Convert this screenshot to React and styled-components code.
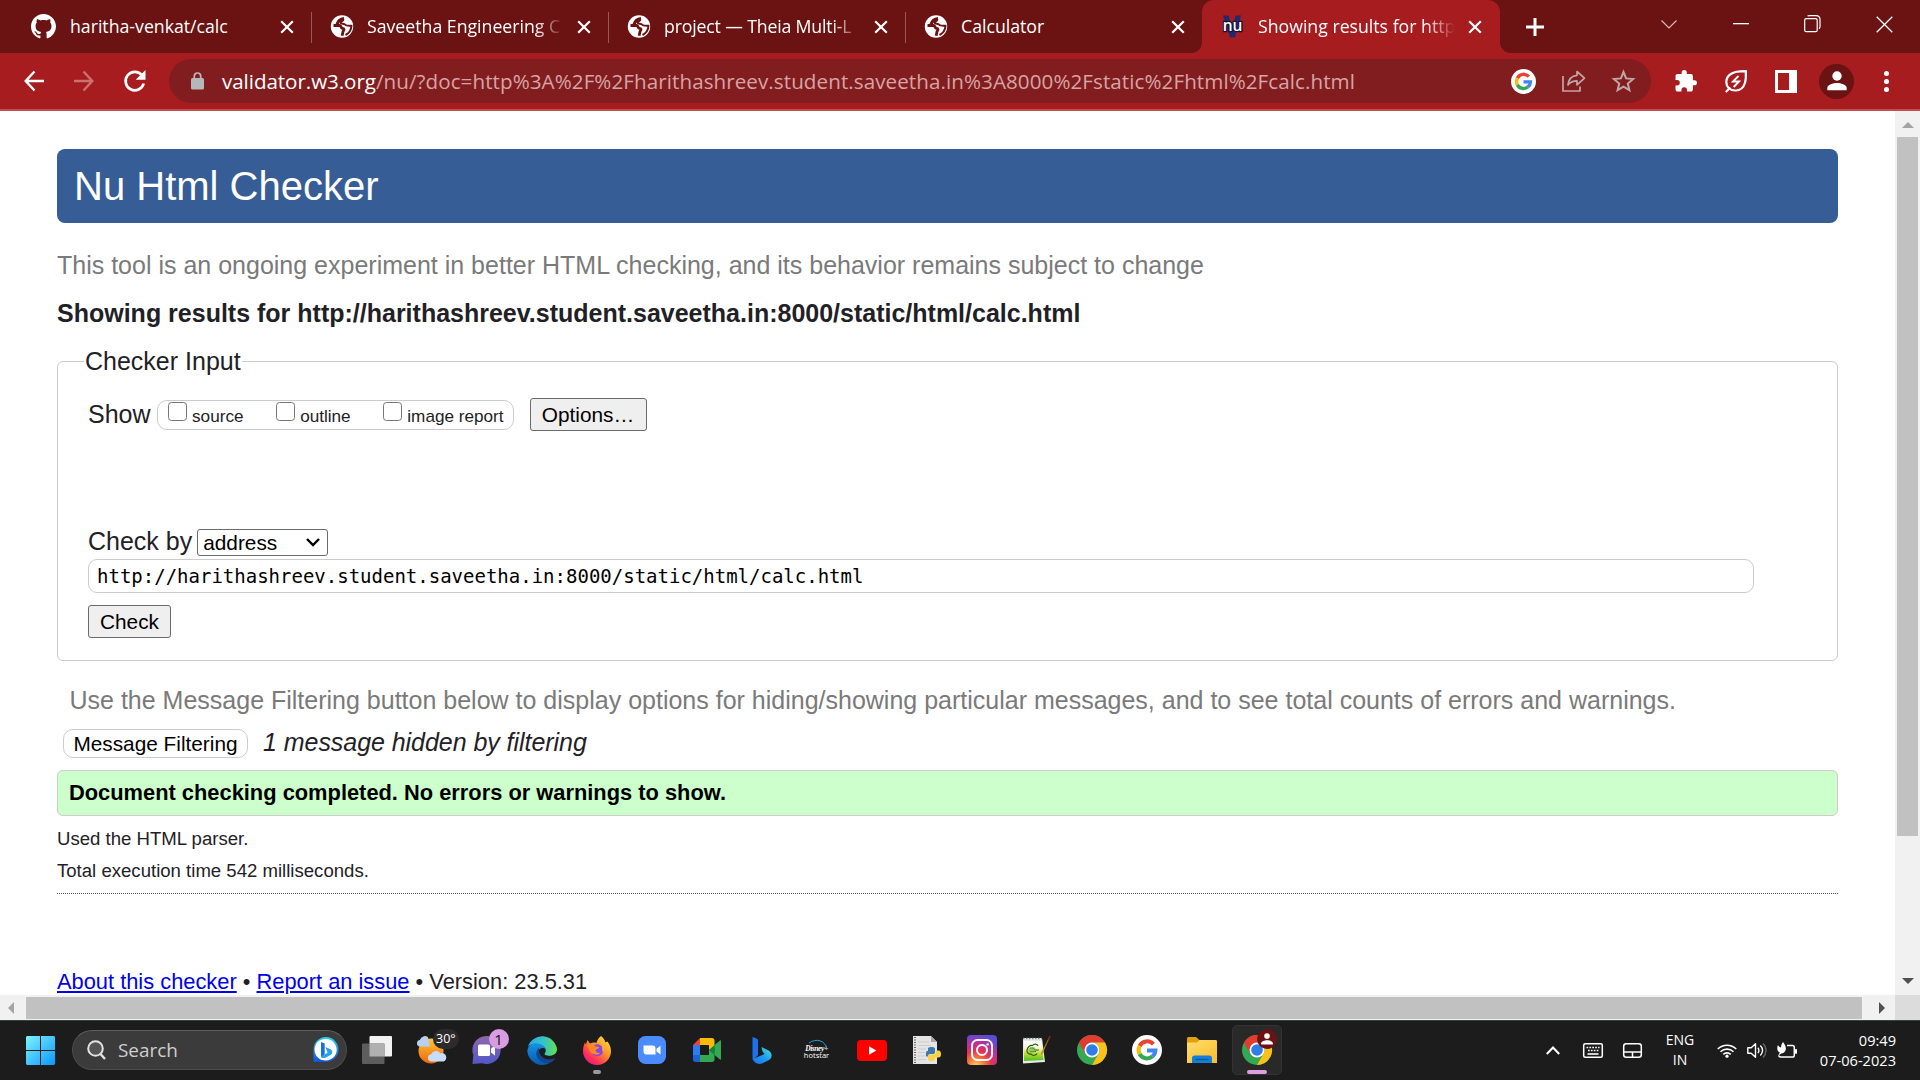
import React from "react";
import styled, { createGlobalStyle, css } from "styled-components";

const Global = createGlobalStyle`
  * { box-sizing: border-box; }
  html, body { margin: 0; padding: 0; background: #fff; overflow: hidden; }
`;

const ui = css`font-family: "Open Sans", "Noto Sans", sans-serif;`;
const sans = css`font-family: "Liberation Sans", Arial, sans-serif;`;

const Screen = styled.div`
  width: 1920px;
  height: 1080px;
  display: flex;
  flex-direction: column;
  overflow: hidden;
  svg { display: block; flex: none; overflow: visible; }
`;

/* ---------- browser tabs ---------- */
const TabStrip = styled.div`
  ${ui}
  height: 53px;
  flex: none;
  display: flex;
  align-items: stretch;
  padding-left: 14px;
  background: #6b1212;
`;
const Tab = styled.div`
  position: relative;
  width: 298px;
  margin-right: -1px;
  padding: 0 14px 0 17px;
  display: flex;
  align-items: center;
  background: ${p => (p.$active ? "#a61c1f" : "transparent")};
  border-radius: ${p => (p.$active ? "12px 12px 0 0" : "0")};
  ${p => p.$line && css`
    &::after {
      content: "";
      position: absolute;
      right: 0;
      top: 12px;
      width: 1px;
      height: 31px;
      background: #97595a;
    }
  `}
  ${p => p.$active && css`
    &::before, &::after {
      content: "";
      position: absolute;
      bottom: 0;
      width: 10px;
      height: 10px;
    }
    &::before { left: -10px; background: radial-gradient(circle at 0 0, transparent 9.5px, #a61c1f 10px); }
    &::after { right: -10px; background: radial-gradient(circle at 100% 0, transparent 9.5px, #a61c1f 10px); }
  `}
`;
const TabTitle = styled.div`
  flex: none;
  width: 197px;
  margin-left: 14px;
  margin-top: -1px;
  white-space: nowrap;
  color: #fff;
  font-size: 17.7px;
  line-height: 28px;
  letter-spacing: ${p => p.$track || 0}px;
  ${p => p.$fade && css`mask-image: linear-gradient(90deg, #000 168px, transparent 197px);`}
`;
const TabClose = styled.div`
  flex: none;
  width: 14px;
  margin-left: 13px;
`;
const Plus = styled.div`
  display: flex;
  align-items: center;
  margin-left: 27px;
`;
const WindowKeys = styled.div`
  display: flex;
  align-items: flex-start;
  margin-left: auto;
  padding: 14px 27px 0 0;
`;
const WindowKey = styled.div`
  width: 18px;
  height: 20px;
  margin-left: ${p => p.$gap}px;
  display: flex;
  align-items: center;
  justify-content: center;
`;

/* ---------- toolbar ---------- */
const Toolbar = styled.div`
  ${ui}
  height: 58px;
  flex: none;
  display: flex;
  align-items: center;
  padding: 0 27px 0 24px;
  background: #a61c1f;
  border-bottom: 2px solid #c24e50;
`;
const NavIcons = styled.div`
  width: 145px;
  display: flex;
  align-items: center;
  gap: 30px;
`;
const Address = styled.div`
  width: 1482px;
  height: 44px;
  display: flex;
  align-items: center;
  padding: 0 16px 0 22px;
  border-radius: 22px;
  background: #821d1f;
`;
const Url = styled.div`
  flex: 1;
  margin: -1px 0 0 18px;
  white-space: nowrap;
  font-size: 20.6px;
  line-height: 30px;
  letter-spacing: 0.075px;
  color: #d7a4a5;
`;
const Domain = styled.span`
  color: #fff;
  letter-spacing: -0.06px;
`;
const AddressIcons = styled.div`
  display: flex;
  align-items: center;
  gap: 26px;
`;
const Extensions = styled.div`
  display: flex;
  align-items: center;
  gap: 28px;
  margin-left: 24px;
`;
const Avatar = styled.div`
  width: 35px;
  height: 35px;
  margin: 0 2px 0 -6px;
  display: flex;
  align-items: center;
  justify-content: center;
  border-radius: 50%;
  background: #6b1212;
`;

/* ---------- page ---------- */
const Viewport = styled.div`
  height: 884px;
  flex: none;
  display: flex;
`;
const Page = styled.main`
  ${sans}
  width: 1895px;
  height: 884px;
  overflow: hidden;
  padding: 38px 57px 0 57px;
  color: #1f2126;
  font-size: 25px;
  line-height: 28px;
  background: #fff;
  white-space: nowrap;
`;
const Banner = styled.h1`
  margin: 0;
  height: 74px;
  padding: 0 17px;
  border-radius: 8px;
  background: #365d95;
  color: #fff;
  font-size: 40px;
  font-weight: 400;
  line-height: 75px;
`;
const Note = styled.p`
  margin: ${p => p.$top}px 0 0 ${p => p.$left || 0}px;
  color: #7a7a7a;
`;
const Result = styled.h2`
  margin: 20px 0 0;
  font-size: 25px;
  line-height: 28px;
`;
const Fieldset = styled.fieldset`
  margin: 20px 0 0;
  height: 314px;
  padding: 0 29px 0 30px;
  border: 1px solid #ccc;
  border-radius: 6px;
`;
const Legend = styled.legend`
  margin-left: -4px;
  padding: 0 1px;
`;
const RowLabel = styled.span`
  padding-bottom: 2px;
`;
const ShowRow = styled.div`
  height: 33px;
  margin-top: 23px;
  display: flex;
  align-items: center;
`;
const CheckGroup = styled.div`
  width: 357px;
  height: 30px;
  margin-left: 6px;
  padding: 1px 9px 0 10px;
  display: flex;
  justify-content: space-between;
  border: 1px solid #ccc;
  border-radius: 10px;
`;
const CheckLabel = styled.label`
  display: flex;
  gap: 5.5px;
  font-size: 17.15px;
  line-height: 28px;
`;
const Box = styled.span`
  width: 19px;
  height: 19px;
  border: 1.5px solid #767676;
  border-radius: 3.5px;
  background: #fff;
`;
const Button = styled.button`
  ${sans}
  display: block;
  height: 33px;
  width: ${p => p.$w}px;
  margin: ${p => p.$m || "0"};
  padding: 0;
  border: 1px solid #6b6b6b;
  border-radius: 3px;
  background: #efefef;
  color: #000;
  font-size: 20.8px;
  line-height: 31px;
  ${p => p.$round && css`
    height: 29px;
    line-height: 25px;
    border-color: #ccc;
    border-radius: 10px;
    background: #fff;
  `}
`;
const AddressRow = styled.div`
  height: 28px;
  margin-top: 97px;
  display: flex;
  align-items: center;
`;
const Select = styled.div`
  width: 131px;
  height: 27px;
  margin-left: 5px;
  padding: 0 7px 0 5px;
  display: flex;
  align-items: center;
  justify-content: space-between;
  border: 1px solid #6b6b6b;
  border-radius: 3px;
  color: #000;
  font-size: 20.8px;
  line-height: 25px;
`;
const UrlInput = styled.div`
  width: 1666px;
  height: 34px;
  margin-top: 3px;
  padding-left: 8px;
  border: 1px solid #ccc;
  border-radius: 9px;
  color: #000;
  font: 19px/32px "DejaVu Sans Mono", monospace;
`;
const FilterRow = styled.div`
  height: 29px;
  margin: 15px 0 0 6px;
  display: flex;
  align-items: center;
  em { margin: -4px 0 0 15px; letter-spacing: -0.05px; }
`;
const Success = styled.p`
  margin: 12px 0 0;
  height: 46px;
  padding-left: 11px;
  border: 1px solid #ccc;
  border-radius: 6px;
  background: #ccffcc;
  color: #000;
  font-size: 21.85px;
  font-weight: 700;
  line-height: 43px;
`;
const Small = styled.p`
  margin: ${p => p.$top}px 0 0;
  font-size: 18.58px;
  line-height: 22px;
`;
const Rule = styled.hr`
  margin: 11px 0 0;
  border: 0;
  border-top: 1px dotted #555;
`;
const Footer = styled.footer`
  margin-top: 75px;
  font-size: 21.85px;
  line-height: 26px;
`;
const Link = styled.a`
  color: #0000ee;
  text-decoration: underline;
  text-decoration-thickness: 2px;
  text-underline-offset: 2px;
`;

/* ---------- scroll bars ---------- */
const VBar = styled.div`
  width: 25px;
  display: flex;
  flex-direction: column;
  align-items: center;
  justify-content: space-between;
  padding: 11px 0 11px;
  background: #f1f1f1;
`;
const VThumb = styled.div`
  width: 21px;
  height: 699px;
  margin: 9px 0 auto;
  background: #c1c1c1;
`;
const HBar = styled.div`
  height: 25px;
  flex: none;
  display: flex;
  align-items: center;
  background: #f1f1f1;
`;
const HThumb = styled.div`
  width: 1836px;
  height: 22px;
  margin: 0 17px 0 10px;
  background: #c1c1c1;
`;
const Corner = styled.div`
  width: 25px;
  height: 25px;
  margin-left: auto;
  background: #dcdcdc;
`;

/* ---------- taskbar ---------- */
const Taskbar = styled.div`
  ${ui}
  height: 60px;
  flex: none;
  display: flex;
  align-items: center;
  padding: 0 24px 1px 26px;
  border-top: 1px solid #3a3f40;
  background: #1c1c1c;
  color: #fff;
`;
const SearchBox = styled.div`
  width: 275px;
  height: 40px;
  margin: 0 2px 0 17px;
  padding: 0 7px 0 14px;
  display: flex;
  align-items: center;
  border: 1px solid #4c4c4c;
  border-top-color: #5f5f5f;
  border-radius: 20px;
  background: #3b3b3b;
`;
const SearchText = styled.span`
  flex: 1;
  margin-left: 12px;
  color: #cfcfcf;
  font-size: 18.9px;
  line-height: 26px;
`;
const AppCell = styled.div`
  position: relative;
  width: 55px;
  height: 50px;
  display: flex;
  align-items: center;
  justify-content: center;
`;
const ActiveTile = styled.div`
  width: 50px;
  height: 50px;
  display: flex;
  align-items: center;
  justify-content: center;
  border: 1px solid #333;
  border-radius: 5px;
  background: #292929;
`;
const Running = styled.i`
  position: absolute;
  bottom: 1px;
  width: ${p => (p.$wide ? 20 : 8)}px;
  height: 4px;
  border-radius: 2px;
  background: ${p => (p.$wide ? "#dd9fe0" : "#9a9a9a")};
`;
const Badge = styled.span`
  position: absolute;
  left: ${p => p.$x}px;
  top: ${p => p.$y}px;
  min-width: 20px;
  height: 20px;
  padding: 0 ${p => p.$pad || 0}px;
  display: flex;
  align-items: center;
  justify-content: center;
  border-radius: 10px;
  background: ${p => p.$bg};
  color: ${p => p.$fg || "#fff"};
  font-size: ${p => p.$size || 14}px;
  line-height: 20px;
`;
const HotstarMark = styled.div`
  position: relative;
  display: flex;
  flex-direction: column;
  align-items: center;
  width: 26px;
  padding-top: 3px;
  color: #fff;
  font-size: 7.5px;
  line-height: 7px;
  b { font: italic 700 7.5px/7px "Liberation Serif", serif; letter-spacing: -0.4px; }
  svg { position: absolute; top: -3px; left: 2px; }
`;
const Tray = styled.div`
  display: flex;
  align-items: center;
  margin-left: auto;
  line-height: 20px;
`;
const TrayItem = styled.div`
  margin-right: ${p => p.$gap}px;
`;
const TrayText = styled.div`
  text-align: ${p => p.$align};
  font-size: ${p => p.$size}px;
  margin: -1px ${p => p.$gap || 0}px 0 0;
  width: ${p => p.$w}px;
`;

/* ---------- drawings ---------- */
const GithubIcon = () => (
  <svg width="25" height="25" viewBox="0 0 16 16" fill="#fff">
    <path d="M8 0C3.58 0 0 3.58 0 8c0 3.54 2.29 6.53 5.47 7.59.4.07.55-.17.55-.38 0-.19-.01-.82-.01-1.49-2.01.37-2.53-.49-2.69-.94-.09-.23-.48-.94-.82-1.13-.28-.15-.68-.52-.01-.53.63-.01 1.08.58 1.23.82.72 1.21 1.87.87 2.33.66.07-.52.28-.87.51-1.07-1.78-.2-3.64-.89-3.64-3.95 0-.87.31-1.59.82-2.15-.08-.2-.36-1.02.08-2.12 0 0 .67-.21 2.2.82.64-.18 1.32-.27 2-.27s1.36.09 2 .27c1.53-1.04 2.2-.82 2.2-.82.44 1.1.16 1.92.08 2.12.51.56.82 1.27.82 2.15 0 3.07-1.87 3.75-3.65 3.95.29.25.54.73.54 1.48 0 1.07-.01 1.93-.01 2.2 0 .21.15.46.55.38A8.01 8.01 0 0 0 16 8c0-4.42-3.58-8-8-8z" />
  </svg>
);
const GlobeIcon = () => (
  <svg width="25" height="25" viewBox="0 0 25 25">
    <circle cx="14" cy="12.500" r="11.200" fill="#fff" />
    <g fill="none" stroke="#6b1212" strokeLinejoin="round">
      <path d="M16 4.500c-3.500.3-6 2.500-7 6" strokeWidth="3" />
      <path d="M5.500 11.500h6c1.800 0 1.200 2.800 3 2.800 2 0 1.800 1.700.6 3l-1 4.500" strokeWidth="2.800" />
      <path d="M15.500 5.500c-.5 2.300-3.500 1.500-3 3.300.7 1.400 3.500.4 4.500 1.700 1 1.400 3.500 1.400 6.500 1.200-.2 4-2.500 7.500-6 9.300" strokeWidth="2" />
    </g>
  </svg>
);
const NuIcon = () => (
  <svg width="25" height="25" viewBox="0 0 25 25">
    <path d="M4 1.500h5.500l4 12 3-12h5.500l-6 22h-5z" fill="#26286f" />
    <text x="13.500" y="17" textAnchor="middle" fontFamily="Open Sans" fontWeight="600" fontSize="15.500" fill="#fff" stroke="#151338" strokeWidth="2.500" paintOrder="stroke">nu</text>
  </svg>
);
const Cross = () => (
  <svg width="14" height="14" viewBox="0 0 14 14" stroke="#fff" strokeWidth="2.200"><path d="M1.200 1.200l11.600 11.600M12.800 1.200L1.200 12.800" /></svg>
);
const GoogleG = ({ size }) => (
  <svg width={size} height={size} viewBox="0 0 30 30" fill="none" strokeWidth="4">
    <circle cx="15" cy="15" r="15" fill="#fff" />
    <path d="M21.400 9.200A8.400 8.400 0 0 0 7.600 11" stroke="#ea4335" />
    <path d="M7.700 10.900a8.400 8.400 0 0 0 0 8.200" stroke="#fbbc05" />
    <path d="M7.600 19a8.400 8.400 0 0 0 12.800 2.400" stroke="#34a853" />
    <path d="M20.300 21.500A8.400 8.400 0 0 0 23.400 15.400H15" stroke="#4285f4" />
  </svg>
);
const ChromeLogo = () => (
  <svg width="30" height="30" viewBox="0 0 30 30">
    <circle cx="15" cy="15" r="15" fill="#34a853" />
    <path d="M2 7.500A15 15 0 0 1 28 7.500H15a7.500 7.500 0 0 0-6.500 11.250z" fill="#e33b2e" />
    <path d="M28 7.500A15 15 0 0 1 15 30l6.500-11.250A7.500 7.500 0 0 0 15 7.500z" fill="#fbc116" />
    <path d="M2 7.500l6.500 11.250 2-2L9 10z" fill="#e33b2e" />
    <circle cx="15" cy="15" r="7.500" fill="#fff" />
    <circle cx="15" cy="15" r="5.800" fill="#2f7de9" />
  </svg>
);
const Person = ({ size, color = "#fff" }) => (
  <svg width={size} height={size} viewBox="0 0 20 20" fill={color}>
    <circle cx="10" cy="5" r="4.700" />
    <path d="M.3 19.300v-2.300c0-3.400 6-5 9.700-5s9.700 1.600 9.700 5v2.300z" />
  </svg>
);
const Arrow = ({ dim, flip }) => (
  <svg width="20" height="22" viewBox="0 0 20 22" fill="none" stroke={dim ? "#cc7072" : "#fff"} strokeWidth="2.400" transform={flip ? "scale(-1 1)" : undefined}>
    <path d="M20 11H2M10.500 1.500L1.700 11l8.800 9.500" />
  </svg>
);

const Windows = () => (
  <svg width="29" height="29" viewBox="0 0 29 29">
    <defs><linearGradient id="win" x1="0" y1="0" x2="29" y2="29" gradientUnits="userSpaceOnUse"><stop stopColor="#7df3fd" /><stop offset="1" stopColor="#0a98fb" /></linearGradient></defs>
    <path fill="url(#win)" d="M1 0h13v14H0V1zM15 0h13l1 1v13H15zM0 15h14v14H1l-1-1zM15 15h14v13l-1 1H15z" />
  </svg>
);
const BingChat = () => (
  <svg width="26" height="26" viewBox="0 0 26 26">
    <defs><linearGradient id="bc" x1="0" y1="0" x2="0" y2="1"><stop stopColor="#2ad3ee" /><stop offset="1" stopColor="#1553d6" /></linearGradient></defs>
    <path d="M13 0a12.500 12.500 0 1 1 0 25H.5V13A12.500 12.500 0 0 1 13 0z" fill="url(#bc)" />
    <path d="M13 2a10.700 10.700 0 1 1 0 21.400c-3 0-5 0-7.500-2.400A10.700 10.700 0 0 1 13 2z" fill="#fff" />
    <path d="M8 5l3.700 1.500v11L8 20z" fill="#1a6fe0" /><path d="M12.500 10l5 2.300c2 1 2.300 4 .5 5.500L13 20.500c-2 1-4.500.8-5-1l6.500-3.700z" fill="#27a3ea" />
  </svg>
);
const TaskView = () => (
  <svg width="30" height="28" viewBox="0 0 30 28">
    <rect x="7.500" width="22.500" height="20.500" rx="1" fill="#f2f2f2" />
    <rect y="7.500" width="22.500" height="20.500" rx="1" fill="#5d5d5d" />
    <path d="M7.500 7.500h15v13h-15z" fill="#b0b0b0" />
  </svg>
);
const Weather = () => (
  <svg width="31" height="28" viewBox="0 0 31 28">
    <defs><linearGradient id="sun" x1="0" y1="0" x2="0" y2="1"><stop stopColor="#ffc53a" /><stop offset="1" stopColor="#f0660c" /></linearGradient></defs>
    <circle cx="15" cy="15" r="12.500" fill="url(#sun)" />
    <path d="M3 10.500a3.500 3.500 0 0 1 1-6.700 5 5 0 0 1 8-2.500l2 9.200z" fill="#b9cff0" />
    <path d="M15 25.500a3.700 3.700 0 0 1 0-7.300 5.500 5.500 0 0 1 9.500-.8 4.200 4.200 0 0 1 3 8.100z" fill="#c5dcfa" />
  </svg>
);
const TeamsChat = () => (
  <svg width="29" height="28" viewBox="0 0 29 28">
    <defs><linearGradient id="tc" x1="0" y1="0" x2="0" y2="1"><stop stopColor="#9167a8" /><stop offset="1" stopColor="#5058c9" /></linearGradient></defs>
    <path d="M14.500 0a14 14 0 1 1-4.500 27.200L.5 28l.8-9A14 14 0 0 1 14.500 0z" fill="url(#tc)" />
    <rect x="6" y="8.500" width="12" height="11.500" rx="1.500" fill="#fff" /><path d="M19 12.500l4-3v10l-4-3z" fill="#fff" />
  </svg>
);
const Edge = () => (
  <svg width="30" height="30" viewBox="0 0 30 30">
    <defs>
      <linearGradient id="e1" x1="0" x2="1"><stop stopColor="#2fa8e8" /><stop offset=".55" stopColor="#35c4c4" /><stop offset="1" stopColor="#64e04c" /></linearGradient>
      <linearGradient id="e2" x1="0" y1="0" x2="0" y2="1"><stop stopColor="#1494e0" /><stop offset="1" stopColor="#0a58b0" /></linearGradient>
    </defs>
    <path d="M.8 12A15 15 0 0 1 30 14c0 4.500-3.500 6.800-7.500 6.800-3.200 0-5.500-1-4.800-2.300 2.300-2.500 1-7.500-4-7.700C7 8.500 3 9 .8 12z" fill="url(#e1)" />
    <path d="M.3 16C1 10 6 7.500 11 8.500c4.500 1 7 3 7.500 5.500-1.500-2-6.500-1.500-7.500 3-1 6 4 12.500 12.500 10.500A15 15 0 0 1 .3 16z" fill="url(#e2)" />
    <path d="M12.200 12.700C9 15 8.500 19 10.500 23c2.500 4.500 8 6 12.500 4.700 2.500-1 4.300-2.700 5.500-4.800-6 3-14 1-16.300-5.500z" fill="#11478c" />
  </svg>
);
const Firefox = () => (
  <svg width="28" height="29" viewBox="0 0 28 29">
    <defs><linearGradient id="ff" x1="1" y1="0" x2=".2" y2="1"><stop stopColor="#fff04a" /><stop offset=".45" stopColor="#ff9426" /><stop offset=".8" stopColor="#ff2f5c" /><stop offset="1" stopColor="#e31587" /></linearGradient></defs>
    <path d="M18 0c3 2.500 4 4.500 4.500 6.500l2-1c1.500 2 3.500 5.500 3.500 9.500a14 14 0 0 1-28 0c0-4 1-6.500 2-8.500l.8 2L4.500 4 7 7.500c2-1 4.500-1.300 6.500-.5C14 4.500 15.500 1.500 18 0z" fill="url(#ff)" />
    <circle cx="14.200" cy="14.200" r="6" fill="#8a45e8" />
    <path d="M4 9c3-2 7-1 8.500 1.500l4 .5c-1 2-3.500 2-4 3.500.5 2 3 3 5 2-3 4-9 2-11-2z" fill="#ff8a23" />
    <path d="M19 8c2 1.500 2.500 3.500 2 6l-1.500 2z" fill="#ffb42e" />
  </svg>
);
const Zoom = () => (
  <svg width="28" height="28" viewBox="0 0 28 28">
    <rect width="28" height="28" rx="7.500" fill="#4a8cff" /><path d="M5.500 9.500h9a3 3 0 0 1 3 3v6h-9a3 3 0 0 1-3-3zM18.500 12.700l4-3v8.800l-4-3z" fill="#fff" />
  </svg>
);
const Meet = () => (
  <svg width="28" height="24" viewBox="0 0 28 24">
    <path d="M0 7l7-7v7z" fill="#ea4335" /><path d="M7 0h12c1.500 0 2.500 1 2.500 2.500V9L16 13V7H7z" fill="#fbbc04" />
    <path d="M0 7h7v10H0z" fill="#2f7cf0" /><path d="M0 17h7v7H2.500C1 24 0 23 0 21.500z" fill="#1a63d8" />
    <path d="M7 17h9v-6l5.500 3v7.500c0 1.500-1 2.500-2.500 2.500H7z" fill="#34a853" /><path d="M16 12l5.500-5v10z" fill="#188038" /><path d="M21.500 7L27 2.500c.6-.4 1 0 1 .5v18c0 .6-.5 1-1 .5L21.500 17z" fill="#34a853" />
  </svg>
);
const Bing = () => (
  <svg width="20" height="27" viewBox="0 0 20 27">
    <defs><linearGradient id="bg" x1="0" y1="1" x2="1" y2="0"><stop stopColor="#1f6df2" /><stop offset=".5" stopColor="#1b9df0" /><stop offset="1" stopColor="#4be6d8" /></linearGradient></defs>
    <path d="M.5 0l4 1.500c1.200.5 1.500 1 1.500 2V18L1 23.500C.5 22 .5 21 .5 20z" fill="#1c72ee" />
    <path d="M9.500 10l7 3.500c4 2.300 4.200 7 .5 9.500l-7 3.500C6 28 1.500 25.500 1 22l11.500-5-2-2.500z" fill="url(#bg)" />
  </svg>
);
const YouTube = () => (
  <svg width="30" height="21" viewBox="0 0 30 21"><rect width="30" height="21" rx="4" fill="#f00" /><path d="M12 6.200l7.300 4.300L12 14.800z" fill="#fff" /></svg>
);
const PythonFile = () => (
  <svg width="28" height="29" viewBox="0 0 28 29">
    <path d="M0 0h18l6 6v22H0z" fill="#e4e4e4" /><path d="M18 0l6 6h-6z" fill="#a8a8a8" />
    <path d="M2 1v27" stroke="#666" strokeWidth="2" strokeDasharray="1 1.500" /><path d="M5 6h11M5 9.500h13M5 13h8M5 16.500h7M5 20h7M5 23.500h8" stroke="#cdcdcd" />
    <path d="M13 17c0-1.500.5-2 2-2v-2.500c0-1 1.500-1.500 3.500-1.500s3.500.5 3.500 1.700V16c0 1.500-1 2-2 2h-3c-1.500 0-2 1-2 2.500h-1.500C12.500 20.500 13 18 13 17z" fill="#3c79ac" />
    <path d="M23 14.500h2.500c2 0 2.500 2 2.500 3.700 0 2-.8 3.300-2.500 3.300H22v1.500c0 1-1.500 2-3.500 2s-3.500-.5-3.500-2V20.500c0-1.200.8-2 2-2h3.500c1.500 0 2.500-1 2.500-2.500z" fill="#fdd140" />
  </svg>
);
const Instagram = () => (
  <svg width="30" height="30" viewBox="0 0 30 30" fill="none" stroke="#fff" strokeWidth="2">
    <defs>
      <radialGradient id="ig" cx=".3" cy="1.050" r="1.050"><stop stopColor="#fed576" /><stop offset=".25" stopColor="#f9803a" /><stop offset=".5" stopColor="#e4334f" /><stop offset=".75" stopColor="#bc30a0" /><stop offset="1" stopColor="#5c4bd4" /></radialGradient>
    </defs>
    <rect width="30" height="30" rx="4" fill="url(#ig)" stroke="none" />
    <rect x="5" y="5" width="20" height="20" rx="5.500" /><circle cx="15" cy="15" r="5" /><circle cx="20.600" cy="9.400" r="1.200" fill="#fff" stroke="none" />
  </svg>
);
const NotepadPP = () => (
  <svg width="29" height="28" viewBox="0 0 29 28">
    <defs><linearGradient id="np" x1="0" y1="0" x2="0" y2="1"><stop stopColor="#fff" /><stop offset=".35" stopColor="#f2f7d8" /><stop offset=".6" stopColor="#c4e02e" /><stop offset="1" stopColor="#4cbe26" /></linearGradient></defs>
    <path d="M1 2h19l3 24-22 1.500z" fill="#e5eae5" /><path d="M2 5h17.500l2 19L2 25z" fill="url(#np)" />
    <path d="M1 2.500h19" stroke="#888" strokeWidth="1.500" strokeDasharray="1.500 1.500" />
    <path d="M5 14c.5-3 3-5 5.500-4.500 1.500-2 5-2 5.500.5M5 14c-.5 3 2 4.500 4 4 1.500 2 5 1.500 6-.5M8 12.500c2-1 4 0 5 1.500h4M8 15.500h6" fill="none" stroke="#2c5a1e" strokeWidth="1.200" />
    <path d="M6 14c1-2.500 4-4 6-3s3 4 0 5.500-6 0-6-2.500z" fill="#7fb84a" opacity=".7" />
    <path d="M28 0l-7.500 17.500-1 1 .2-2z" fill="#f0a21a" stroke="#a06a10" strokeWidth=".5" /><path d="M26.500 3.500L28 0" stroke="#8a2020" strokeWidth="1.500" />
  </svg>
);
const Folder = () => (
  <svg width="30" height="26" viewBox="0 0 30 26">
    <defs><linearGradient id="fo" x1="0" y1="0" x2="1" y2="1"><stop stopColor="#ffde6f" /><stop offset="1" stopColor="#fbbc2b" /></linearGradient></defs>
    <path d="M0 1.500C0 .7.700 0 1.500 0H9l3.500 3H28v8H0z" fill="#e3a008" /><path d="M0 5.500h10L12.500 3H28.500c1 0 1.500.6 1.500 1.500V26H0z" fill="url(#fo)" />
    <path d="M5 26v-5c0-1.500 1-2.500 2.500-2.500h15c1.500 0 2.500 1 2.500 2.500v5z" fill="#1080d8" /><path d="M8.500 22.500h13" stroke="#0b5394" strokeWidth="1.300" />
  </svg>
);

const tabs = [
  { icon: <GithubIcon />, title: "haritha-venkat/calc", line: true },
  { icon: <GlobeIcon />, title: "Saveetha Engineering C", line: true, fade: true },
  { icon: <GlobeIcon />, title: "project — Theia Multi-L", line: true, fade: true, track: -0.16 },
  { icon: <GlobeIcon />, title: "Calculator" },
  { icon: <NuIcon />, title: "Showing results for http", active: true, fade: true },
];

const apps = [
  <TaskView />,
  <><Weather /><Badge $x={29} $y={4} $bg="#2b2b2b" $size={12.5} $pad={3}>30°</Badge></>,
  <><TeamsChat /><Badge $x={29.5} $y={4} $bg="#d99be2" $fg="#111" $size={15}>1</Badge></>,
  <Edge />,
  <><Firefox /><Running /></>,
  <Zoom />,
  <Meet />,
  <Bing />,
  <HotstarMark>
    <svg width="22" height="12" viewBox="0 0 22 12" fill="none" stroke="#1aa6d8" strokeWidth="1"><path d="M3 4C10-1 19 1 21 10" /></svg>
    <b>Disney+</b>hotstar
  </HotstarMark>,
  <YouTube />,
  <PythonFile />,
  <Instagram />,
  <NotepadPP />,
  <ChromeLogo />,
  <GoogleG size={30} />,
  <Folder />,
  <><ActiveTile><ChromeLogo /></ActiveTile><Badge $x={28} $y={4} $bg="#6b1212"><Person size={12} /></Badge><Running $wide /></>,
];

export default function App() {
  return (
    <Screen>
      <Global />
      <TabStrip>
        {tabs.map((t, i) => (
          <Tab key={i} $active={t.active} $line={t.line}>
            {t.icon}
            <TabTitle $fade={t.fade} $track={t.track}>{t.title}</TabTitle>
            <TabClose><Cross /></TabClose>
          </Tab>
        ))}
        <Plus>
          <svg width="18" height="18" viewBox="0 0 18 18" stroke="#fff" strokeWidth="3"><path d="M9 0v18M0 9h18" /></svg>
        </Plus>
        <WindowKeys>
          <WindowKey $gap={0}><svg width="16" height="9" viewBox="0 0 16 9" fill="none" stroke="#d9b9b9" strokeWidth="1.200"><path d="M.5.500L8 8 15.500.500" /></svg></WindowKey>
          <WindowKey $gap={54}><svg width="16" height="2" viewBox="0 0 16 2"><rect width="16" height="1.300" fill="#fff" /></svg></WindowKey>
          <WindowKey $gap={53}><svg width="17" height="18" viewBox="0 0 17 18" fill="none" stroke="#fff" strokeWidth="1.200"><rect x=".7" y="3.700" width="12.500" height="13" rx="1.500" /><path d="M3.500 1.200C4 .6 5 .6 6 .6h6c2.500 0 4 1.500 4 4v7c0 1-.3 1.700-1 2.200" /></svg></WindowKey>
          <WindowKey $gap={54}><svg width="17" height="17" viewBox="0 0 17 17" stroke="#fff" strokeWidth="1.300"><path d="M.7.700l15.600 15.600M16.300.700L.7 16.300" /></svg></WindowKey>
        </WindowKeys>
      </TabStrip>

      <Toolbar>
        <NavIcons>
          <Arrow />
          <Arrow dim flip />
          <svg width="22" height="22" viewBox="0 0 22 22"><path d="M18 5.300A9.200 9.200 0 1 0 19.700 13.500" fill="none" stroke="#fff" strokeWidth="2.700" /><path d="M21.500 0v9.800h-9.800z" fill="#fff" /></svg>
        </NavIcons>
        <Address>
          <svg width="13" height="18" viewBox="0 0 13 18"><path d="M3.300 7V4.200a3.200 3.200 0 0 1 6.400 0V7" fill="none" stroke="#b9b9bb" strokeWidth="1.700" /><rect y="6" width="13" height="11.500" rx="1.500" fill="#b5b8ba" /></svg>
          <Url><Domain>validator.w3.org</Domain>/nu/?doc=http%3A%2F%2Fharithashreev.student.saveetha.in%3A8000%2Fstatic%2Fhtml%2Fcalc.html</Url>
          <AddressIcons>
            <GoogleG size={25} />
            <svg width="24" height="22" viewBox="0 0 24 22" fill="none" stroke="#c0a6a6" strokeWidth="1.700"><path d="M1 6v15h17v-4.500" /><path d="M15 1.500l7.500 6.700-7.500 6.700v-4c-4 0-6.500 1-9 4 .5-5 3.500-9 9-9.600z" strokeLinejoin="round" /></svg>
            <svg width="23" height="22" viewBox="0 0 23 22" fill="none" stroke="#c0a6a6" strokeWidth="2"><path d="M11.500 2l2.600 6.400 7 .6-5.300 4.500 1.600 6.700-5.900-3.600-5.900 3.600 1.600-6.700L1.900 9l7-.6z" /></svg>
          </AddressIcons>
        </Address>
        <Extensions>
          <svg width="22" height="22" viewBox="1.500 1 21.500 21.500" fill="#fff"><path d="M20.500 11H19V7c0-1.100-.9-2-2-2h-4V3.500a2.500 2.500 0 0 0-5 0V5H4c-1.100 0-2 .9-2 2v3.800h1.500a2.700 2.700 0 0 1 0 5.400H2V20c0 1.100.9 2 2 2h3.800v-1.500a2.700 2.700 0 0 1 5.400 0V22H17c1.100 0 2-.9 2-2v-4h1.500a2.500 2.500 0 0 0 0-5z" /></svg>
          <svg width="22" height="23" viewBox="0 0 22 23" fill="none" stroke="#fff" strokeWidth="2.200"><path d="M20.800 1.200c.4 6 .6 19-10 19.300-6 .2-9.500-3.500-9.500-8.500C1.500 4 8 1 20.800 1.200zM.8 22l4.500-4.500" /><path d="M13.500 6l-5.500 5.500h6L8.700 17" strokeWidth="1.900" /></svg>
          <svg width="22" height="23" viewBox="0 0 22 23"><path fillRule="evenodd" fill="#fff" d="M0 0h22v23H0zM3 3v17h11V3z" /></svg>
          <Avatar><Person size={20} /></Avatar>
          <svg width="5" height="21" viewBox="0 0 5 21" fill="#fff"><circle cx="2.500" cy="2.500" r="2.500" /><circle cx="2.500" cy="10.500" r="2.500" /><circle cx="2.500" cy="18.500" r="2.500" /></svg>
        </Extensions>
      </Toolbar>

      <Viewport>
        <Page>
          <Banner>Nu Html Checker</Banner>
          <Note $top={28}>This tool is an ongoing experiment in better HTML checking, and its behavior remains subject to change</Note>
          <Result>Showing results for http://harithashreev.student.saveetha.in:8000/static/html/calc.html</Result>
          <Fieldset>
            <Legend>Checker Input</Legend>
            <ShowRow>
              <RowLabel>Show</RowLabel>
              <CheckGroup>
                <CheckLabel><Box />source</CheckLabel>
                <CheckLabel><Box />outline</CheckLabel>
                <CheckLabel><Box />image report</CheckLabel>
              </CheckGroup>
              <Button $w={117} $m="0 0 0 16px">Options…</Button>
            </ShowRow>
            <AddressRow>
              <RowLabel>Check by</RowLabel>
              <Select>
                address
                <svg width="14" height="9" viewBox="0 0 14 9" fill="none" stroke="#000" strokeWidth="2.400"><path d="M1 1l6 6 6-6" /></svg>
              </Select>
            </AddressRow>
            <UrlInput>http://harithashreev.student.saveetha.in:8000/static/html/calc.html</UrlInput>
            <Button $w={83} $m="12px 0 0">Check</Button>
          </Fieldset>
          <Note $top={25} $left={12.5}>Use the Message Filtering button below to display options for hiding/showing particular messages, and to see total counts of errors and warnings.</Note>
          <FilterRow>
            <Button $round $w={185}>Message Filtering</Button>
            <em>1 message hidden by filtering</em>
          </FilterRow>
          <Success>Document checking completed. No errors or warnings to show.</Success>
          <Small $top={12}>Used the HTML parser.</Small>
          <Small $top={10}>Total execution time 542 milliseconds.</Small>
          <Rule />
          <Footer><Link>About this checker</Link> • <Link>Report an issue</Link> • Version: 23.5.31</Footer>
        </Page>
        <VBar>
          <svg width="12" height="6" viewBox="0 0 12 6"><path d="M0 6l6-6 6 6z" fill="#a3a3a3" /></svg>
          <VThumb />
          <svg width="12" height="6" viewBox="0 0 12 6"><path d="M0 0h12L6 6z" fill="#505050" /></svg>
        </VBar>
      </Viewport>
      <HBar>
        <svg width="16" height="12" viewBox="0 0 16 12"><path d="M14 0v12l-6-6z" fill="#a3a3a3" /></svg>
        <HThumb />
        <svg width="6" height="12" viewBox="0 0 6 12"><path d="M0 0l6 6-6 6z" fill="#505050" /></svg>
        <Corner />
      </HBar>

      <Taskbar>
        <Windows />
        <SearchBox>
          <svg width="19" height="20" viewBox="0 0 19 20" fill="none" stroke="#e3e3e3" strokeWidth="2"><circle cx="8.500" cy="8.500" r="7.300" fill="#555" /><path d="M13.500 14l4.500 5" strokeWidth="2.400" /></svg>
          <SearchText>Search</SearchText>
          <BingChat />
        </SearchBox>
        {apps.map((a, i) => <AppCell key={i}>{a}</AppCell>)}
        <Tray>
          <TrayItem $gap={23}><svg width="14" height="9" viewBox="0 0 14 9" fill="none" stroke="#fff" strokeWidth="2"><path d="M.8 8L7 1.500 13.200 8" /></svg></TrayItem>
          <TrayItem $gap={20}><svg width="20" height="15" viewBox="0 0 20 15" fill="none" stroke="#fff" strokeWidth="1.500"><rect x=".7" y=".7" width="18.600" height="13.600" rx="1.500" /><path d="M3.500 4.500h13M5 7.500h10.500" strokeWidth="1.700" strokeDasharray="1.700 1.200" /><path d="M4.500 11h11" strokeWidth="1.600" /></svg></TrayItem>
          <TrayItem $gap={22}><svg width="19" height="15" viewBox="0 0 19 15" fill="none" stroke="#fff" strokeWidth="1.500"><rect x=".7" y=".7" width="17.600" height="13.600" rx="2.500" /><path d="M.7 9h17.600M9.500 9v5.500" /></svg></TrayItem>
          <TrayText $align="center" $size={14} $w={32} $gap={21}>ENG<br />IN</TrayText>
          <TrayItem $gap={10}><svg width="20" height="15" viewBox="0 0 20 15" fill="none" stroke="#fff" strokeWidth="1.600"><path d="M.8 6a13 13 0 0 1 18.400 0M3.500 8.800a9.300 9.300 0 0 1 13 0M6.300 11.400a5.300 5.300 0 0 1 7.400 0" /><circle cx="10" cy="13.200" r="1.600" fill="#fff" stroke="none" /></svg></TrayItem>
          <TrayItem $gap={10}><svg width="20" height="17" viewBox="0 0 20 17" fill="none" stroke="#fff" strokeWidth="1.400"><path d="M.8 5.700h3.400L8.500 1.700v13.600l-4.300-4H.8z" strokeLinejoin="round" /><path d="M10.800 5.800c1.500 1.500 1.500 3.800 0 5.300M13.300 3.500c3 2.800 3 7.200 0 10" /><path d="M16 1.500c4 4 4 10 0 14" stroke="#666" /></svg></TrayItem>
          <TrayItem $gap={19}><svg width="20" height="17" viewBox="0 0 20 17"><path d="M10 3.500h5.500c1 0 1.800.8 1.800 1.800v7.900c0 1-.8 1.800-1.800 1.800H4c-1.200 0-2-.5-2.500-1.500" fill="none" stroke="#fff" strokeWidth="1.500" /><rect x="17.800" y="7.200" width="2.200" height="4.500" fill="#fff" /><path d="M6 0c2.500 3 3.500 6 2.500 8.500-.8 2-2.500 3-4.300 3L1 14l1.800-3.500C-.5 9 0 5 1 3c.7 1.500 1.500 2 3 2.500C4 3.500 4.800 1.500 6 0z" fill="#fff" /></svg></TrayItem>
          <TrayText $align="right" $size={14.6} $w={80}>09:49<br />07-06-2023</TrayText>
        </Tray>
      </Taskbar>
    </Screen>
  );
}
